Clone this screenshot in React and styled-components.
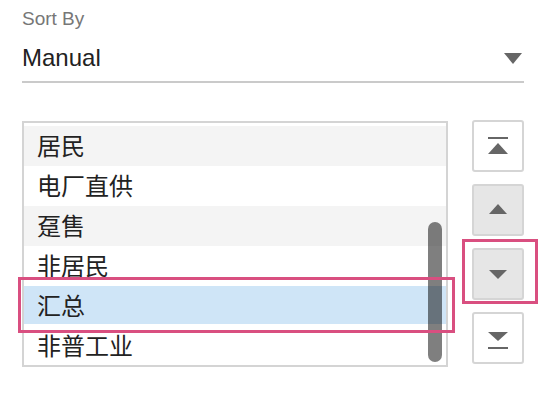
import React from 'react';
import styled, { createGlobalStyle } from 'styled-components';

const GlobalStyle = createGlobalStyle`
  body {
    margin: 0;
    background: #fff;
    font-family: "Liberation Sans", Arial, sans-serif;
  }
`;

const Page = styled.div`
  width: 502px;
  padding: 9px 0 0 22px;
`;

const Label = styled.div`
  font-size: 19px;
  line-height: 20px;
  color: #777;
`;

const Select = styled.div`
  display: flex;
  align-items: center;
  justify-content: space-between;
  margin-top: 15px;
  padding-bottom: 9px;
  border-bottom: 2px solid #cacaca;
`;

const SelectValue = styled.span`
  font-size: 24px;
  line-height: 28px;
  color: #222;
`;

const Caret = styled.svg`
  width: 18px;
  height: 11px;
  margin-right: 2px;
  fill: #666;
`;

const ListArea = styled.div`
  position: relative;
  display: flex;
  align-items: flex-start;
  margin-top: 37px;
`;

const ListBox = styled.div`
  position: relative;
  box-sizing: border-box;
  width: 426px;
  height: 246px;
  margin-top: 1px;
  padding-top: 3px;
  border: 2px solid #d4d4d4;
  overflow: hidden;
`;

const Row = styled.div`
  box-sizing: border-box;
  height: 40px;
  padding: 0 0 2px 13px;
  font-family: "Noto Sans CJK SC", "Liberation Sans", sans-serif;
  font-size: 24px;
  line-height: 38px;
  color: #222;
  background: ${(p) => (p.$selected ? '#cfe5f7' : p.$striped ? '#f4f4f4' : '#fff')};
  box-shadow: ${(p) => (p.$selected ? 'inset 0 -2px 0 #fff' : 'none')};
`;

const Thumb = styled.div`
  position: absolute;
  top: 99px;
  right: 4px;
  width: 14px;
  height: 140px;
  border-radius: 7px;
  background: rgba(0, 0, 0, 0.5);
`;

const ButtonColumn = styled.div`
  display: flex;
  flex-direction: column;
  gap: 12px;
  margin-left: 24px;
`;

const MoveButton = styled.button`
  box-sizing: border-box;
  width: 52px;
  height: 52px;
  padding: 0;
  border: 2px solid #d5d5d5;
  border-radius: 3px;
  background: ${(p) => (p.$muted ? '#e6e6e6' : '#fff')};
  display: block;
  svg {
    display: block;
    width: 48px;
    height: 48px;
    fill: #666;
  }
`;

const Highlight = styled.div`
  position: absolute;
  box-sizing: border-box;
  border: 3px solid #d94f80;
  pointer-events: none;
`;

const items = ['居民', '电厂直供', '趸售', '非居民', '汇总', '非普工业'];
const selectedIndex = 4;

const icons = {
  top: (
    <>
      <rect x="14" y="15" width="20" height="2" />
      <polygon points="24,21 14,32 34,32" />
    </>
  ),
  up: <polygon points="24,18 15,28 33,28" />,
  down: <polygon points="15,20 33,20 24,29" />,
  bottom: (
    <>
      <polygon points="14,18 34,18 24,27" />
      <rect x="14" y="33" width="20" height="2" />
    </>
  ),
};

const buttons = [
  { key: 'top', muted: false },
  { key: 'up', muted: true },
  { key: 'down', muted: true },
  { key: 'bottom', muted: false },
];

const App = () => (
  <>
    <GlobalStyle />
    <Page>
      <Label>Sort By</Label>
      <Select>
        <SelectValue>Manual</SelectValue>
        <Caret viewBox="0 0 18 11">
          <polygon points="0,0 18,0 9,11" />
        </Caret>
      </Select>
      <ListArea>
        <ListBox>
          {items.map((item, index) => (
            <Row key={item} $striped={index % 2 === 0} $selected={index === selectedIndex}>
              {item}
            </Row>
          ))}
          <Thumb />
        </ListBox>
        <ButtonColumn>
          {buttons.map((b) => (
            <MoveButton key={b.key} $muted={b.muted}>
              <svg viewBox="0 0 48 48">{icons[b.key]}</svg>
            </MoveButton>
          ))}
        </ButtonColumn>
        <Highlight style={{ left: -4, top: 157, width: 437, height: 56 }} />
        <Highlight style={{ left: 440, top: 119, width: 76, height: 65 }} />
      </ListArea>
    </Page>
  </>
);

export default App;
